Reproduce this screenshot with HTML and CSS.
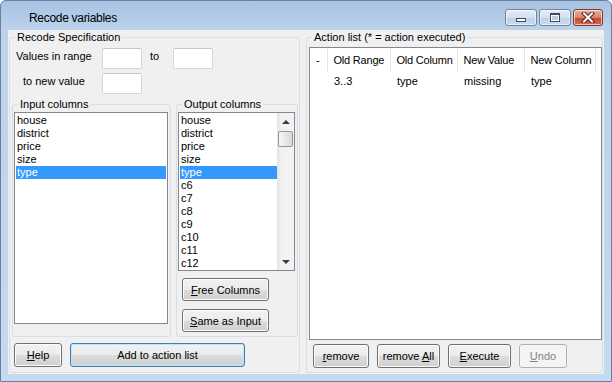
FILE: index.html
```html
<!DOCTYPE html>
<html lang="en">

<head>
    <meta charset="UTF-8">
    <title>Recode variables</title>
    <link rel="stylesheet" href="styles.css">
</head>

<body>
    <div class="window">
        <div class="titlebar">
            <span class="title">Recode variables</span>
            <div class="caption-buttons">
                <div class="cap-btn">
                    <svg width="12" height="10" viewBox="0 0 12 10">
                        <rect x="1.5" y="5.5" width="9" height="3" fill="#fff" stroke="#3b4b60"/>
                    </svg>
                </div>
                <div class="cap-btn">
                    <svg width="12" height="10" viewBox="0 0 12 10">
                        <rect x="1" y="0" width="10" height="9" fill="#3b4b60"/>
                        <rect x="2" y="2" width="8" height="6" fill="#fff"/>
                        <rect x="3" y="3" width="6" height="4" fill="#b9cce3"/>
                    </svg>
                </div>
                <div class="cap-btn close">
                    <svg width="14" height="11" viewBox="0 0 14 11">
                        <path d="M3 1.5 L11 9.5 M11 1.5 L3 9.5" stroke="#5a2219" stroke-width="4" stroke-linecap="square"/>
                        <path d="M3 1.5 L11 9.5 M11 1.5 L3 9.5" stroke="#fff" stroke-width="2" stroke-linecap="square"/>
                    </svg>
                </div>
            </div>
        </div>

        <div class="client">
            <fieldset class="group spec">
                <legend>Recode Specification</legend>

                <div class="form-row">
                    <label class="lbl">Values in range</label>
                    <input class="textbox" type="text">
                    <label class="lbl to">to</label>
                    <input class="textbox" type="text">
                </div>
                <div class="form-row">
                    <label class="lbl indent">to new value</label>
                    <input class="textbox" type="text">
                </div>

                <div class="columns">
                    <fieldset class="group inner input-cols">
                        <legend>Input columns</legend>
                        <div class="listbox input-list">
                            <div class="items">
                                <div class="item">house</div>
                                <div class="item">district</div>
                                <div class="item">price</div>
                                <div class="item">size</div>
                                <div class="item selected">type</div>
                            </div>
                        </div>
                    </fieldset>

                    <fieldset class="group inner output-cols">
                        <legend>Output columns</legend>
                        <div class="listbox output-list">
                            <div class="items">
                                <div class="item">house</div>
                                <div class="item">district</div>
                                <div class="item">price</div>
                                <div class="item">size</div>
                                <div class="item selected">type</div>
                                <div class="item">c6</div>
                                <div class="item">c7</div>
                                <div class="item">c8</div>
                                <div class="item">c9</div>
                                <div class="item">c10</div>
                                <div class="item">c11</div>
                                <div class="item">c12</div>
                            </div>
                            <div class="scrollbar">
                                <div class="arrow"><span class="tri up"></span></div>
                                <div class="thumb"></div>
                                <div class="track"></div>
                                <div class="arrow"><span class="tri down"></span></div>
                            </div>
                        </div>
                        <button class="btn col-btn first"><u>F</u>ree Columns</button>
                        <button class="btn col-btn"><u>S</u>ame as Input</button>
                    </fieldset>
                </div>

                <div class="button-row">
                    <button class="btn help-btn"><u>H</u>elp</button>
                    <button class="btn add-btn default">Add to action list</button>
                </div>
            </fieldset>

            <fieldset class="group actions">
                <legend>Action list (* = action executed)</legend>
                <div class="listview">
                    <table>
                        <colgroup>
                            <col style="width: 17px">
                            <col style="width: 63px">
                            <col style="width: 67px">
                            <col style="width: 67px">
                            <col style="width: 71px">
                            <col>
                        </colgroup>
                        <thead>
                            <tr>
                                <th>-</th>
                                <th>Old Range</th>
                                <th>Old Column</th>
                                <th>New Value</th>
                                <th>New Column</th>
                                <th class="filler"></th>
                            </tr>
                        </thead>
                        <tbody>
                            <tr>
                                <td></td>
                                <td>3..3</td>
                                <td>type</td>
                                <td>missing</td>
                                <td>type</td>
                                <td></td>
                            </tr>
                        </tbody>
                    </table>
                </div>
                <div class="button-row action-buttons">
                    <button class="btn remove-btn"><u>r</u>emove</button>
                    <button class="btn wide-btn">remove <u>A</u>ll</button>
                    <button class="btn wide-btn"><u>E</u>xecute</button>
                    <button class="btn undo-btn" disabled><u>U</u>ndo</button>
                </div>
            </fieldset>
        </div>
    </div>
</body>

</html>
```

FILE: styles.css
```css
* {
    box-sizing: border-box
}

body {
    margin: 0;
    font-family: "Liberation Sans", Arial, sans-serif;
    font-size: 11px;
    color: #000
}

.window {
    width: 612px;
    height: 382px;
    display: flex;
    flex-direction: column;
    padding: 0 7px 7px 7px;
    background: linear-gradient(#a8c2e1, #bdd3ec 30px, #c5d9ef);
    border: 1px solid #6a809c;
    border-radius: 6px 6px 0 0
}

.titlebar {
    height: 29px;
    display: flex;
    align-items: flex-start
}

.title {
    margin-left: 21px;
    padding-top: 10px;
    font-size: 12px;
    line-height: 15px;
    letter-spacing: -0.3px
}

.caption-buttons {
    margin-left: auto;
    margin-right: 1px;
    padding-top: 8px;
    display: flex;
    gap: 2px
}

.cap-btn {
    width: 32px;
    height: 17px;
    display: flex;
    align-items: center;
    justify-content: center;
    border: 1px solid #6f86a3;
    border-radius: 3px;
    background: linear-gradient(#e4edf7, #d3e1f0 50%, #bfd2e8 51%, #c9daee);
    box-shadow: inset 0 0 0 1px rgba(255, 255, 255, .6)
}

.cap-btn.close {
    width: 30px;
    border-color: #7b3a30;
    background: linear-gradient(#eab0a3, #d9826f 50%, #c7452f 51%, #d66a50)
}

.client {
    height: 344px;
    display: flex;
    gap: 6px;
    padding: 1px;
    background-color: #f0f0f0
}

.group {
    margin: 0;
    padding: 0;
    min-width: 0;
    border: 1px solid #d5dfe5;
    border-radius: 3px
}

.group legend {
    margin-left: 5px;
    padding: 0 2px;
    line-height: 13px;
    font-size: 11px
}

.spec {
    width: 291px;
    padding-bottom: 5px
}

.actions {
    width: 297px;
    padding-bottom: 4px
}

.form-row {
    display: flex;
    align-items: flex-start;
    margin-top: 4px;
    padding-left: 6px;
    height: 21px
}

.lbl {
    width: 86px;
    padding-top: 2px;
    line-height: 13px
}

.lbl.indent {
    padding-left: 7px
}

.lbl.to {
    width: 31px;
    padding-left: 8px
}

.textbox {
    width: 40px;
    height: 21px;
    margin: 0;
    border: 1px solid #d3d7dd;
    border-top-color: #c3c7ce;
    border-radius: 2px;
    background-color: #fff;
    font: inherit
}

.columns {
    display: flex;
    gap: 5px;
    margin-top: 4px;
    padding-left: 2px;
    padding-right: 1px
}

.inner .listbox {
    margin-top: 1px;
    margin-left: 1px
}

.input-cols {
    width: 159px;
    padding-bottom: 12px
}

.output-cols {
    width: 122px;
    padding-bottom: 4px
}

.listbox {
    display: flex;
    border: 1px solid #828790;
    background-color: #fff;
    padding: 1px;
    overflow: hidden
}

.input-list {
    width: 154px;
    height: 212px
}

.output-list {
    width: 117px;
    height: 159px;
    padding-right: 0;
    padding-top: 0;
    padding-bottom: 0
}

.output-list .items {
    padding-top: 1px
}

.items {
    flex: 1;
    min-width: 0
}

.item {
    height: 13px;
    line-height: 13px;
    padding-left: 1px;
    white-space: nowrap
}

.item.selected {
    background-color: #3399ff;
    color: #fff
}

.scrollbar {
    width: 17px;
    display: flex;
    flex-direction: column;
    background: linear-gradient(90deg, #e3e3e3, #f1f1f1 25%, #f3f3f3)
}

.arrow {
    height: 17px;
    display: flex;
    align-items: center;
    justify-content: center
}

.tri {
    width: 0;
    height: 0;
    border-left: 4px solid transparent;
    border-right: 4px solid transparent
}

.tri.up {
    border-bottom: 4px solid #3c3c3c;
    margin-top: 1px
}

.tri.down {
    border-top: 4px solid #3c3c3c
}

.thumb {
    height: 16px;
    margin: 1px 1px 0 1px;
    border: 1px solid #979797;
    border-radius: 2px;
    background: linear-gradient(90deg, #f6f6f6, #e8e8e8 50%, #d9d9d9)
}

.track {
    flex: 1
}

.btn {
    height: 24px;
    margin: 0;
    padding: 0;
    font: inherit;
    color: #000;
    border: 1px solid #707070;
    border-radius: 3px;
    background: linear-gradient(#f2f2f2, #ebebeb 50%, #dddddd 51%, #cfcfcf);
    box-shadow: inset 0 0 0 1px #fcfcfc
}

.btn.default {
    border-color: #3c7fb1;
    box-shadow: inset 0 0 0 1px #bfe4f8
}

.btn:disabled {
    border-color: #adb2b5;
    background: #f4f4f4;
    color: #838383;
    box-shadow: none
}

.col-btn {
    display: block;
    width: 87px;
    height: 23px;
    margin-left: 5px;
    margin-top: 8px
}

.col-btn.first {
    margin-top: 7px
}

.button-row {
    display: flex;
    gap: 8px;
    margin-top: 6px;
    padding-left: 4px
}

.help-btn {
    width: 48px
}

.add-btn {
    width: 175px
}

.listview {
    margin-top: 3px;
    margin-left: 2px;
    width: 293px;
    height: 293px;
    border: 1px solid #828790;
    background-color: #fff
}

.listview table {
    width: 100%;
    border-collapse: collapse;
    table-layout: fixed
}

.listview th {
    height: 24px;
    padding: 0 0 0 6px;
    font-weight: normal;
    text-align: left;
    letter-spacing: -0.2px;
    border-right: 1px solid #e5e5e5;
    white-space: nowrap;
    overflow: hidden
}

.listview th.filler {
    border-right: none
}

.listview td {
    height: 17px;
    padding: 0 0 0 7px;
    white-space: nowrap
}

.action-buttons {
    margin-top: 4px;
    padding-left: 6px
}

.remove-btn {
    width: 56px
}

.wide-btn {
    width: 63px
}

.undo-btn {
    width: 48px
}
```
